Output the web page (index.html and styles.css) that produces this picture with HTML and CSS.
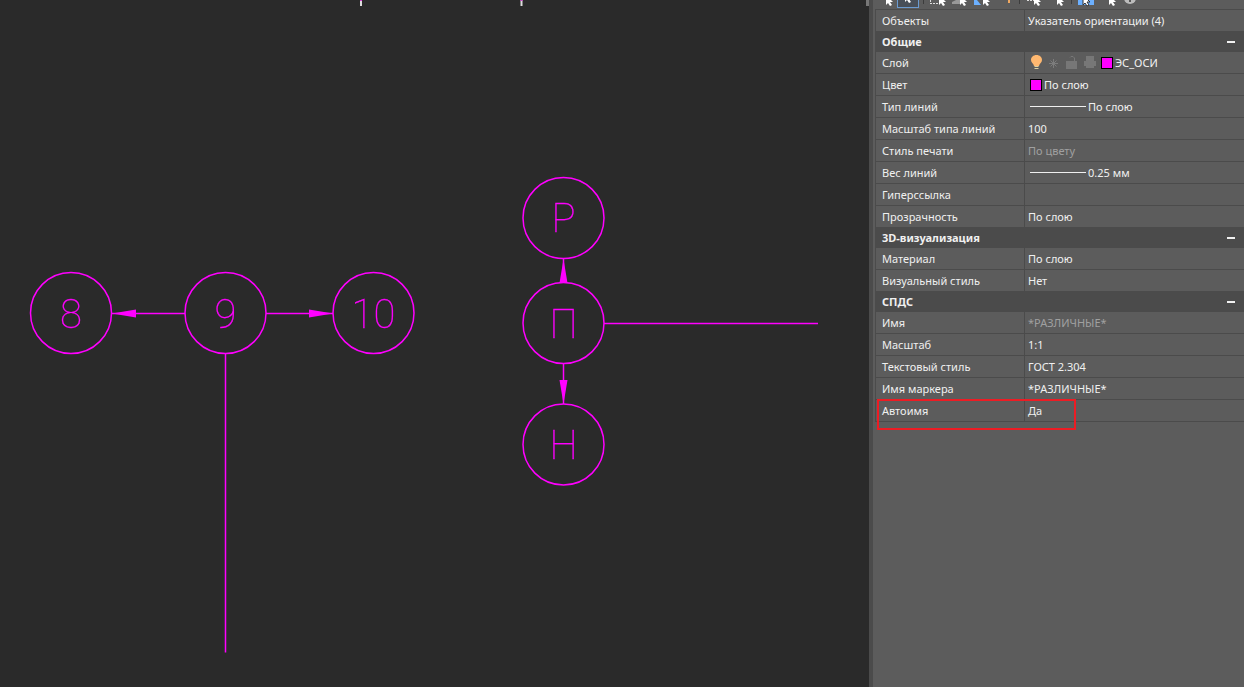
FILE: index.html
```html
<!DOCTYPE html>
<html lang="ru">
<head>
    <meta charset="UTF-8">
    <title>Указатель ориентации</title>
    <link rel="stylesheet" href="styles.css">
</head>
<body>
    <main class="canvas">
        <svg class="drawing" width="869" height="687" viewBox="0 0 869 687">
            <!-- cut off objects at the top edge -->
            <path class="tick" d="M361 0v6M521.5 0v6"/>
            <path class="tick-top" d="M361 0v1M521.5 0v1"/>
            <path class="tick-side" d="M867.5 0v6"/>

            <!-- digital axes -->
            <circle cx="71" cy="313" r="40.5"/>
            <circle cx="225.5" cy="313" r="40.5"/>
            <circle cx="373.5" cy="313" r="40.5"/>
            <path d="M112 313.5H185M266 313.5H333M225.5 354V652.5"/>
            <path class="arrow" d="M112 313.5L136 309.5V317.5ZM333 313.5L309 309.5V317.5Z"/>
            <text x="71" y="328">8</text>
            <text x="225.5" y="328">9</text>
            <text x="373.5" y="328">10</text>

            <!-- letter axes -->
            <circle cx="563.5" cy="218" r="40.5"/>
            <circle cx="563.5" cy="323" r="40.5"/>
            <circle cx="563.5" cy="444.5" r="40.5"/>
            <path d="M563.5 259V283M563.5 363V404M604 323.5H818"/>
            <path class="arrow" d="M563.5 259L559.5 283H567.5ZM563.5 404L559.5 380H567.5Z"/>
            <text x="563.5" y="232">Р</text>
            <text x="563.5" y="338">П</text>
            <text x="563.5" y="459">Н</text>
        </svg>
    </main>

    <aside class="panel">
        <div class="toolbar">
            <svg width="368" height="9" viewBox="0 0 368 9">
                <defs>
                    <path id="cursor" d="M0 -5V5L2 3L4 6L6 5L4 2H7Z"/>
                </defs>
                <rect class="pressed" x="22.5" y="-8.5" width="21" height="16"/>
                <path class="sep" d="M48.5 0V4M144.5 0V4M196.5 0V4"/>
                <path class="dots" d="M55 3.5H65M55.5 0V3M152 .5H160"/>
                <path class="block" d="M77 2L81 0H86V4H77Z"/>
                <path class="blue" d="M99 0H102L106 5H99Z"/>
                <path class="bolt" d="M134 0V3"/>
                <rect class="blue" x="203" y="-4" width="16" height="9"/>
                <g class="cursors">
                    <use href="#cursor" x="11"/>
                    <use href="#cursor" x="30" y="-3"/>
                    <use href="#cursor" x="64"/>
                    <use href="#cursor" x="85"/>
                    <use href="#cursor" x="108"/>
                    <use href="#cursor" x="159"/>
                    <use href="#cursor" x="182"/>
                    <use class="outlined" href="#cursor" x="208"/>
                    <use href="#cursor" x="234"/>
                </g>
                <circle class="info" cx="255" cy="-2" r="6"/>
                <path class="info-mark" d="M255 -2V2"/>
            </svg>
        </div>

        <table class="props">
            <colgroup><col class="name"><col></colgroup>
            <tbody>
                <tr><th scope="row">Объекты</th><td>Указатель ориентации (4)</td></tr>
            </tbody>
            <tbody>
                <tr class="group"><th colspan="2"><div>Общие <button type="button" aria-label="Свернуть"></button></div></th></tr>
                <tr>
                    <th scope="row">Слой</th>
                    <td>
                        <div class="value">
                            <svg class="layer-icons" width="70" height="16" viewBox="0 0 70 16">
                                <path class="bulb" d="M6.5 0C3.2 0 1 2.3 1 5C1 7.5 3.5 8.5 4 11H9C9.5 8.5 12 7.5 12 5C12 2.3 9.8 0 6.5 0Z"/>
                                <path class="bulb-base" d="M4.5 11.5H8.5M4.5 13.5H8.5"/>
                                <path class="sun" d="M23.5 4V13M19 8.5H28M20.5 5.5L26.5 11.5M26.5 5.5L20.5 11.5"/>
                                <path class="off" d="M36 6H47V14H36Z"/>
                                <path class="shackle" d="M40 2.5L41 1.5H43L44.5 3V6"/>
                                <path class="off" d="M56 1H64V6H66V11H64V13H56V11H54V6H56Z"/>
                            </svg>
                            <span class="swatch"></span>ЭС_ОСИ
                        </div>
                    </td>
                </tr>
                <tr><th scope="row">Цвет</th><td><div class="value"><span class="swatch"></span>По слою</div></td></tr>
                <tr><th scope="row">Тип линий</th><td><div class="value"><span class="line"></span>По слою</div></td></tr>
                <tr><th scope="row">Масштаб типа линий</th><td>100</td></tr>
                <tr><th scope="row">Стиль печати</th><td class="muted">По цвету</td></tr>
                <tr><th scope="row">Вес линий</th><td><div class="value"><span class="line"></span>0.25 мм</div></td></tr>
                <tr><th scope="row">Гиперссылка</th><td></td></tr>
                <tr><th scope="row">Прозрачность</th><td>По слою</td></tr>
            </tbody>
            <tbody>
                <tr class="group"><th colspan="2"><div>3D-визуализация <button type="button" aria-label="Свернуть"></button></div></th></tr>
                <tr><th scope="row">Материал</th><td>По слою</td></tr>
                <tr><th scope="row">Визуальный стиль</th><td>Нет</td></tr>
            </tbody>
            <tbody>
                <tr class="group"><th colspan="2"><div>СПДС <button type="button" aria-label="Свернуть"></button></div></th></tr>
                <tr><th scope="row">Имя</th><td class="muted">*РАЗЛИЧНЫЕ*</td></tr>
                <tr><th scope="row">Масштаб</th><td>1:1</td></tr>
                <tr><th scope="row">Текстовый стиль</th><td>ГОСТ 2.304</td></tr>
                <tr><th scope="row">Имя маркера</th><td>*РАЗЛИЧНЫЕ*</td></tr>
                <tr><th scope="row" class="marked">Автоимя</th><td>Да</td></tr>
            </tbody>
        </table>
    </aside>
</body>
</html>
```

FILE: styles.css
```css
body {
    margin: 0;
    min-height: 100vh;
    display: flex;
    background: #2a2a2a;
    color: #f0f0f0;
    font-family: "Noto Sans", "Open Sans", sans-serif;
    font-size: 11px;
}

.canvas {
    flex: 1;
    min-width: 0;
    overflow: hidden;
}

.drawing {
    display: block;
    fill: none;
    stroke: #f0f;
    stroke-width: 1.5;
    will-change: transform;
}

.drawing text {
    font-family: Roboto, "Open Sans", sans-serif;
    font-size: 40px;
    font-weight: 100;
    text-anchor: middle;
    fill: #f0f;
    stroke-width: 0.3;
}

.drawing .arrow {
    fill: #f0f;
    stroke: none;
}

.drawing .tick {
    stroke: #ddd;
    stroke-width: 2;
}

.drawing .tick-top {
    stroke: #d040d0;
    stroke-width: 2;
}

.drawing .tick-side {
    stroke: #777;
    stroke-width: 3;
}

.panel {
    flex: 0 0 375px;
    box-sizing: border-box;
    padding-left: 2px;
    border-left: 4px solid #4b4b4b;
    background: #5c5c5c;
}

.toolbar {
    height: 9px;
    overflow: hidden;
}

.toolbar svg {
    display: block;
}

.toolbar .pressed { fill: #484f58; stroke: #6b9bd0; }
.toolbar .sep { stroke: #3c3c3c; }
.toolbar .dots { fill: none; stroke: #ddd; stroke-dasharray: 2 1; }
.toolbar .block { fill: #999; }
.toolbar .blue { fill: #6cb0ff; }
.toolbar .bolt { stroke: #f0a860; stroke-width: 2; }
.toolbar .cursors { fill: #fff; }
.toolbar .outlined { stroke: #333; }
.toolbar .info { fill: #bbb; }
.toolbar .info-mark { stroke: #555; stroke-width: 2; }

.props {
    width: 100%;
    border-collapse: separate;
    border-spacing: 0;
    border-left: 1px solid #4b4b4b;
    border-top: 1px solid #4b4b4b;
    table-layout: fixed;
}

.props .name {
    width: 149px;
}

.props th,
.props td {
    box-sizing: border-box;
    height: 22px;
    padding: 0 3px;
    border-bottom: 1px solid #4b4b4b;
    line-height: 16px;
    font-weight: normal;
    text-align: left;
    white-space: nowrap;
}

.props th {
    padding-left: 6px;
    border-right: 1px solid #4b4b4b;
}

.props .group th {
    height: 20px;
    padding-right: 9px;
    border: 0;
    background: #4b4b4b;
    font-weight: bold;
}

.group div {
    display: flex;
    align-items: center;
    justify-content: space-between;
}

.group button {
    width: 8px;
    height: 2px;
    padding: 0;
    border: 0;
    background: #f0f0f0;
}

.props .muted {
    color: #a0a0a0;
}

.value {
    display: flex;
    align-items: center;
    padding-left: 2px;
}

.layer-icons {
    flex: none;
    margin-right: 1px;
}

.bulb { fill: #ffb870; }
.bulb-base { stroke: #ddd0a0; }
.sun { stroke: #7c7c7c; }
.off { fill: #777; }
.shackle { fill: none; stroke: #777; }

.swatch {
    flex: none;
    box-sizing: border-box;
    width: 12px;
    height: 12px;
    margin-right: 2px;
    border: 1px solid #000;
    background: #f0f;
}

.line {
    flex: none;
    width: 56px;
    height: 1px;
    margin-right: 2px;
    background: #f0f0f0;
}

.marked {
    position: relative;
}

/* red frame over the last row */
.marked::after {
    content: "";
    position: absolute;
    left: 1px;
    top: -1px;
    box-sizing: border-box;
    width: 199px;
    height: 31px;
    border: 2px solid #ed1c24;
}
```
